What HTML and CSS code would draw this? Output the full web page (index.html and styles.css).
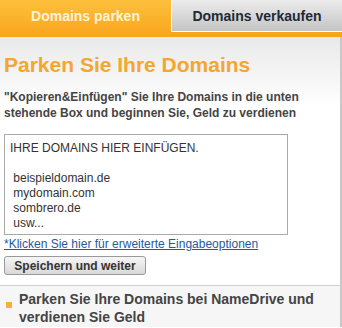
FILE: index.html
```html
<!DOCTYPE html>
<html lang="de">
  <head>
    <meta charset="UTF-8" />
    <title>Domains parken</title>
    <link rel="stylesheet" href="styles.css">
  </head>
  <body>
    <div class="tabs">
      <div class="tab active">Domains parken</div>
      <div class="tab">Domains verkaufen</div>
    </div>

    <div class="panel">
      <h1>Parken Sie Ihre Domains</h1>
      <p class="intro">"Kopieren&amp;Einfügen" Sie Ihre Domains in die unten stehende Box und beginnen Sie, Geld zu verdienen</p>

      <div class="domains">IHRE DOMAINS HIER EINFÜGEN.

 beispieldomain.de
 mydomain.com
 sombrero.de
 usw...</div>
      <a class="more" href="#">*Klicken Sie hier für erweiterte Eingabeoptionen</a>
      <button class="save">Speichern und weiter</button>
    </div>

    <div class="footer">
      <span class="bullet"></span>
      <span class="footer-text">Parken Sie Ihre Domains bei NameDrive und verdienen Sie Geld</span>
    </div>
  </body>
</html>
```

FILE: styles.css
```css
body {
  margin: 0;
  font-family: 'Liberation Sans', Arial, sans-serif;
  background: #fff;
  width: 342px;
}

.tabs {
  display: flex;
  height: 37px;
  background: #f9a51c;
}

.tab {
  box-sizing: border-box;
  height: 32px;
  width: 171px;
  padding-top: 8px;
  text-align: center;
  font-size: 14px;
  font-weight: bold;
  color: #1e2a36;
  background: linear-gradient(#ececec, #c4c4c4);
  border-left: 1px solid #fff;
  border-bottom: 1px solid #fff;
}

.tab.active {
  height: 37px;
  width: 171px;
  border: none;
  color: #fff3d4;
  background: linear-gradient(#fdc03c, #f9a51c);
}

.panel {
  border-right: 2px solid #c8c8c8;
  padding: 1px 4px 10px;
  background: linear-gradient(#e9e9e9, #ffffff 70px);
  border-bottom: 1px solid #cfcfcf;
}

h1 {
  margin: 15px 0 0;
  font-size: 21px;
  color: #f5a532;
}

.intro {
  margin: 12px 0 13px;
  font-size: 12px;
  font-weight: bold;
  line-height: 16px;
  color: #444;
}

.domains {
  box-sizing: border-box;
  width: 284px;
  height: 101px;
  padding: 6px 5px;
  border: 1px solid #aaa;
  background: #fff;
  white-space: pre;
  font-size: 12px;
  line-height: 15px;
  color: #333;
}

.more {
  display: block;
  margin-top: 2px;
  font-size: 12px;
  color: #1d5aa0;
}

.save {
  display: block;
  margin-top: 5px;
  height: 19px;
  width: 142px;
  padding: 0;
  font-family: inherit;
  font-size: 12px;
  font-weight: bold;
  color: #333;
  border: 1px solid #999;
  border-radius: 3px;
  background: linear-gradient(#f6f6f6, #d8d8d8);
}

.footer {
  display: flex;
  gap: 7px;
  align-items: flex-start;
  padding: 4px 4px 0 6px;
  height: 41px;
  box-sizing: border-box;
  border-right: 2px solid #c8c8c8;
  background: #f6f6f6;
}

.bullet {
  flex: none;
  width: 6px;
  height: 6px;
  margin-top: 12px;
  background: #f7b13a;
}

.footer-text {
  font-size: 14px;
  font-weight: bold;
  line-height: 18px;
  color: #444;
}
```
